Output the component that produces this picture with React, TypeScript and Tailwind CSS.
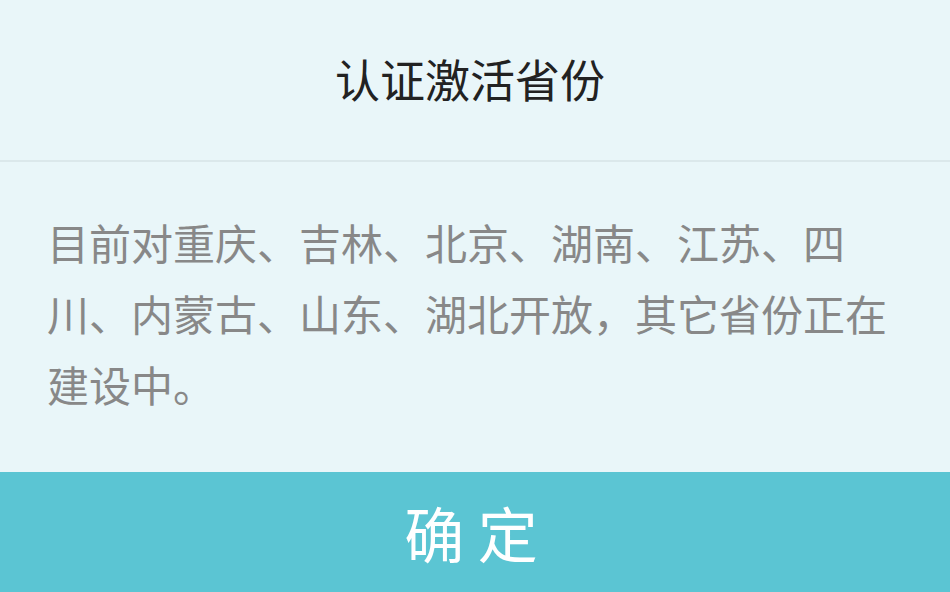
import React from "react";

export default function App() {
  return (
    <div
      className="w-[950px] h-[592px] flex flex-col bg-[#e9f6f9] overflow-hidden"
      style={{ fontFamily: '"Noto Sans CJK SC", "Noto Sans", sans-serif' }}
    >
      <div className="h-[160px] flex items-center justify-center pr-[10px] pb-[2px] text-[45px] text-[#222222] shrink-0">
        认证激活省份
      </div>
      <div className="h-[2px] bg-[#dbe8eb] shrink-0" />
      <div className="flex-1 pl-[47px] pr-[48px] pt-[44px] text-[42px] leading-[71px] text-[#888888]">
        目前对重庆、吉林、北京、湖南、江苏、四川、内蒙古、山东、湖北开放，其它省份正在建设中。
      </div>
      <button className="h-[120px] shrink-0 bg-[#5bc5d3] text-white text-[60px] flex items-center justify-center pr-[8px]">
        确 定
      </button>
    </div>
  );
}
